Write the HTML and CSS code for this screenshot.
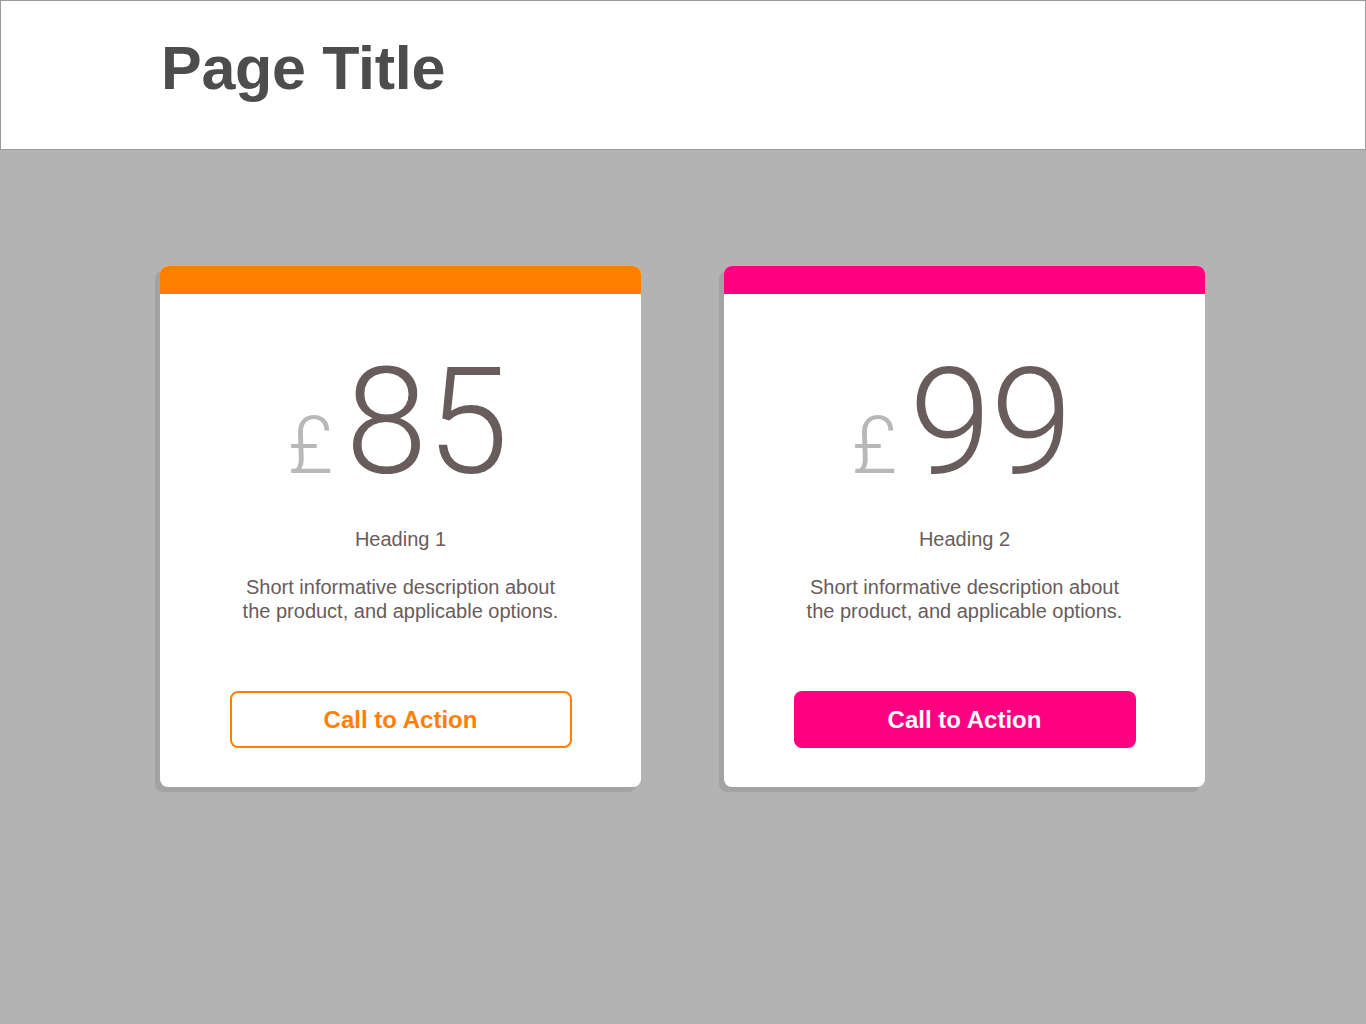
FILE: index.html
```html
<!DOCTYPE html>
<html>
<head>
<meta charset="utf-8">
<link rel="stylesheet" href="styles.css">
</head>
<body>
<header class="top">
  <h1 class="page-title">Page Title</h1>
</header>
<main class="cards">
  <section class="card card-orange">
    <div class="band"></div>
    <div class="price"><span class="cur">£</span><span class="amt">85</span></div>
    <h2 class="heading">Heading 1</h2>
    <p class="desc">Short informative description about<br>the product, and applicable options.</p>
    <button class="cta cta-outline">Call to Action</button>
  </section>
  <section class="card card-pink">
    <div class="band"></div>
    <div class="price"><span class="cur">£</span><span class="amt">99</span></div>
    <h2 class="heading">Heading 2</h2>
    <p class="desc">Short informative description about<br>the product, and applicable options.</p>
    <button class="cta cta-solid">Call to Action</button>
  </section>
</main>
</body>
</html>
```
FILE: styles.css
```css
html, body {
  margin: 0;
  padding: 0;
}
body {
  background: #b3b3b3;
  font-family: "Liberation Sans", Arial, sans-serif;
  min-height: 1024px;
}
.top {
  background: #fff;
  height: 148px;
  border: 1px solid #9a9a9a;
  box-sizing: content-box;
  padding-left: 160px;
  display: flex;
  align-items: flex-start;
}
.page-title {
  margin: 0;
  padding-top: 31px;
  font-size: 61px;
  line-height: 72px;
  font-weight: 700;
  color: #4d4d4d;
  letter-spacing: -0.3px;
}
.cards {
  display: flex;
  justify-content: flex-start;
  gap: 83px;
  padding-top: 116px;
  padding-left: 160px;
}
.card {
  width: 481px;
  height: 521px;
  background: #fff;
  border-radius: 8px;
  box-shadow: -5px 5px 0 #a3a3a3;
  display: flex;
  flex-direction: column;
  align-items: center;
  overflow: hidden;
}
.band {
  height: 28px;
  width: 100%;
  flex: none;
}
.card-orange .band { background: #ff8000; }
.card-pink .band { background: #ff0080; }
.price {
  display: flex;
  align-items: baseline;
  margin-top: 54px;
  padding-right: 6px;
  height: 150px;
  font-family: "Roboto", "Liberation Sans", sans-serif;
  font-weight: 300;
}
.cur {
  font-size: 80px;
  line-height: 150px;
  color: #b8b8b8;
  margin-right: 12px;
}
.amt {
  font-size: 148px;
  line-height: 150px;
  color: #685c5c;
  letter-spacing: -1px;
}
.heading {
  margin: 30px 0 0;
  font-size: 20px;
  line-height: 22px;
  font-weight: 400;
  color: #685c5c;
}
.desc {
  margin: 25px 0 0;
  font-size: 20px;
  line-height: 24px;
  color: #685c5c;
  text-align: center;
}
.cta {
  margin-top: 68px;
  width: 342px;
  height: 57px;
  border-radius: 8px;
  font-family: "Liberation Sans", Arial, sans-serif;
  font-size: 24px;
  font-weight: 700;
  cursor: pointer;
  padding: 0;
}
.cta-outline {
  background: #fff;
  border: 2px solid #ff8000;
  color: #ff8000;
}
.cta-solid {
  background: #ff0080;
  border: none;
  color: #fff;
}
```
